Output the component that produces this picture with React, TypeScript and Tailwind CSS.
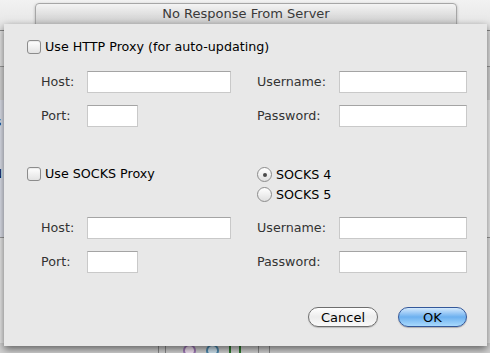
const font = "font-['DejaVu_Sans','Liberation_Sans',sans-serif]"

function Checkbox() {
    return <span className="block shrink-0 w-[14px] h-[14px] rounded-[3px] border border-[#8c8c8c] bg-gradient-to-b from-white to-[#e3e3e3] shadow-[inset_0_1px_1px_rgba(0,0,0,0.08)]" />
}

function Radio({ checked }: { checked?: boolean }) {
    return (
        <span className="flex shrink-0 items-center justify-center w-[15px] h-[15px] rounded-full border border-[#8c8c8c] bg-gradient-to-b from-white to-[#e0e0e0]">
            {checked && <span className="block w-[4px] h-[4px] rounded-full bg-[#4a4a4a]" />}
        </span>
    )
}

function Field({ w }: { w: number }) {
    return (
        <span
            className={`block h-[22px] bg-white border border-[#c9c9c9] border-t-[#a4a4a4] ${w === 144 ? 'w-[144px]' : w === 51 ? 'w-[51px]' : 'w-[128px]'}`}
        />
    )
}

function FieldGrid() {
    const rows = [
        { left: 'Host:', lw: 144, right: 'Username:' },
        { left: 'Port:', lw: 51, right: 'Password:' },
    ]
    return (
        <div className="flex flex-col gap-[12px]">
            {rows.map(r => (
                <div key={r.left} className="flex items-center h-[22px]">
                    <span className="ml-[14px] w-[46px] text-[#333]">{r.left}</span>
                    <span className="w-[144px]"><Field w={r.lw} /></span>
                    <span className="ml-[26px] w-[82px] text-[#333]">{r.right}</span>
                    <Field w={128} />
                </div>
            ))}
        </div>
    )
}

export default function App() {
    return (
        <div className={`relative w-[490px] h-[353px] overflow-hidden bg-[#ececec] text-[12.7px] ${font}`}>
            {/* window behind the sheet */}
            <div className="h-[30px] bg-gradient-to-b from-[#f2f2f2] to-[#e4e4e4]" />
            <div className="h-[1px] bg-[#8a8a8a]" />
            <div className="h-[35px] bg-[#e4e4e4]" />
            <div className="h-[1px] bg-[#9a9a9a]" />
            <div className="flex h-[33px]">
                <div className="w-[20px] bg-[#d6d6d6]" />
                <div className="flex-1 bg-[#d9d9d9]" />
            </div>
            <div className="flex h-[137px]">
                <div className="w-[20px] bg-[#dde0ea] text-[12px] leading-none">
                    <div className="mt-[16px] -ml-[5px]">s</div>
                    <div className="mt-[40px] -ml-[7px]">N</div>
                </div>
                <div className="flex-1 bg-[#f3f3f3]" />
            </div>
            <div className="h-[1px] bg-[#9a9a9a]" />
            <div className="h-[105px] bg-[#e8e8e8]" />
            <div className="flex h-[10px] bg-[#d2d2d2]">
                <div className="ml-[158px] w-[1px] bg-[#8a8a8a]" />
                <div className="ml-[6px] w-[1px] bg-[#8a8a8a]" />
                <span className="ml-[17px] mt-[1px] w-[13px] h-[13px] rounded-full border-2 border-[#a07ab8] bg-[#f4e4f4]" />
                <span className="ml-[10px] mt-[1px] w-[13px] h-[13px] rounded-full border-2 border-[#4d8ab0] bg-[#cfe3ef]" />
                <span className="ml-[10px] mt-[1px] w-[12px] h-[12px] border-2 border-[#2e7a2e]" />
                <div className="ml-[17px] w-[1px] bg-[#8a8a8a]" />
                <div className="ml-[10px] w-[1px] bg-[#8a8a8a]" />
            </div>

            {/* title bar of the parent window */}
            <div className="absolute left-[35px] top-[3px] w-[422px] h-[22px] flex items-center justify-center rounded-t-[4px] border border-[#a6a6a6] bg-gradient-to-b from-[#f4f4f4] to-[#cdcdcd] text-[#3a3a3a] text-[13px] shadow-[0_1px_3px_rgba(0,0,0,0.25)]">
                No Response From Server
            </div>

            {/* sheet */}
            <div className="absolute left-[4px] top-[24px] w-[483px] h-[322px] bg-[#e8e8e8] shadow-[0_3px_8px_rgba(0,0,0,0.55)] flex flex-col pl-[23px] pr-[20px] text-black">
                <div className="mt-[16px] flex items-center gap-[4px] h-[14px]">
                    <Checkbox />
                    <span>Use HTTP Proxy (for auto-updating)</span>
                </div>
                <div className="mt-[17px]">
                    <FieldGrid />
                </div>
                <div className="mt-[40px] flex h-[35px]">
                    <div className="w-[230px] flex items-center gap-[4px] h-[14px]">
                        <Checkbox />
                        <span className="leading-[14px]">Use SOCKS Proxy</span>
                    </div>
                    <div className="flex flex-col gap-[5px]">
                        <div className="flex items-center gap-[4px] h-[15px] leading-[15px]">
                            <Radio checked />
                            <span>SOCKS 4</span>
                        </div>
                        <div className="flex items-center gap-[4px] h-[15px] leading-[15px]">
                            <Radio />
                            <span>SOCKS 5</span>
                        </div>
                    </div>
                </div>
                <div className="mt-[15px]">
                    <FieldGrid />
                </div>
                <div className="mt-[34px] flex justify-end gap-[20px]">
                    <button className="w-[70px] h-[20px] rounded-full border border-[#6e6e6e] bg-gradient-to-b from-white via-[#ececec] to-[#fafafa] text-[13px] leading-none shadow-[0_1px_1px_rgba(0,0,0,0.2)]">
                        Cancel
                    </button>
                    <button className="w-[69px] h-[20px] rounded-full border border-[#34589a] bg-gradient-to-b from-[#d4e9fc] via-[#6cb0ef] to-[#a9dafd] text-[13px] leading-none shadow-[0_1px_1px_rgba(0,0,0,0.25)]">
                        OK
                    </button>
                </div>
            </div>
        </div>
    )
}
